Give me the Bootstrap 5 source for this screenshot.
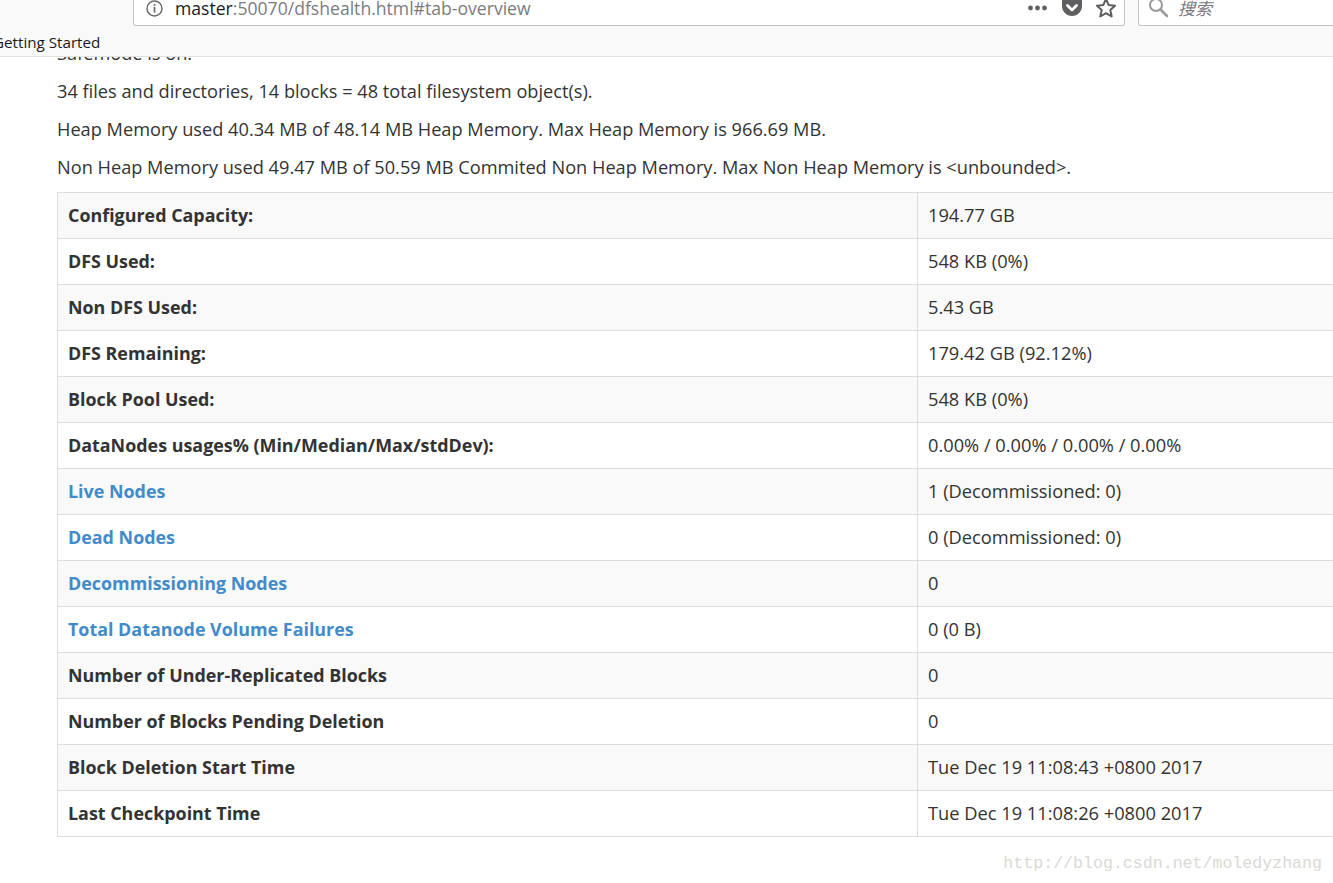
<!DOCTYPE html>
<html lang="en">
<head>
    <meta charset="UTF-8">
    <meta name="viewport" content="width=device-width, initial-scale=1.0">
    <title>Namenode information</title>
    <link href="https://cdn.jsdelivr.net/npm/bootstrap@5.3.3/dist/css/bootstrap.min.css" rel="stylesheet">
    <style>
        html, body { height: 100%; overflow: hidden; }
        body { background: #fff; font-family: "Open Sans", "Noto Sans", sans-serif; color: #333; }
        .browser-chrome { height: 57px; background: #f9f9fa; border-bottom: 1px solid #e1e1e2; position: relative; z-index: 2; }
        .toolbar-row { height: 26px; overflow: hidden; }
        .url-box { width: 992px; margin-left: 133px; height: 26px; background: #fff; border: 1px solid #c4c4c6; border-top: 0; border-radius: 0 0 3px 3px; font-size: 17.6px; padding: 0 7px 9px 11px; }
        .url-icon { margin-right: 11px; }
        .url-host { color: #1a1a1a; }
        .url-rest { color: #7b7b7f; }
        .url-actions { gap: 12px; }
        .search-box { width: 210px; margin-left: 13px; height: 26px; background: #fff; border: 1px solid #c4c4c6; border-top: 0; border-right: 0; border-radius: 0 0 0 3px; padding: 0 0 9px 9px; font-size: 17px; color: #7b7b7f; font-family: "Noto Sans CJK SC", sans-serif; font-style: italic; }
        .bookmark-row { font-size: 15.2px; line-height: 20px; padding-top: 6px; margin-left: -7px; color: #1a1a1a; white-space: nowrap; }
        .page-wrap { width: 1500px; padding-left: 57px; margin-top: -17px; font-size: 18.2px; line-height: 26px; }
        .page-wrap p { margin-bottom: 12px; }
        .fs-table { width: 1380px; table-layout: fixed; font-size: 18.25px; line-height: 25px; margin-bottom: 0; border-color: #ddd; --bs-table-striped-bg: #f9f9f9; --bs-table-color: #333; --bs-table-striped-color: #333; }
        .fs-table > tbody > tr > * { padding: 9px 10px 11px; border: 1px solid #ddd; font-weight: 400; height: 46px; }
        .fs-table > tbody > tr > th { width: 860px; padding: 10px; font-weight: 700; font-size: 17.9px; }
        .fs-table a { color: #428bca; text-decoration: none; }
        .watermark { right: 11px; bottom: 9px; font-family: "Liberation Mono", monospace; font-size: 16.6px; line-height: 20px; color: #d9d9d5; z-index: 3; }
    </style>
</head>
<body>
    <div class="browser-chrome">
        <div class="toolbar-row d-flex">
            <div class="url-box d-flex align-items-center flex-shrink-0">
                <svg width="19" height="19" viewBox="0 0 19 19" class="flex-shrink-0 url-icon">
                    <circle cx="9.5" cy="9.5" r="7.5" fill="none" stroke="#66666a" stroke-width="1.4"/>
                    <rect x="8.7" y="8" width="1.7" height="5.5" fill="#66666a"/>
                    <rect x="8.7" y="5" width="1.7" height="1.8" fill="#66666a"/>
                </svg>
                <div class="flex-grow-1 text-nowrap"><span class="url-host">master</span><span class="url-rest">:50070/dfshealth.html#tab-overview</span></div>
                <div class="d-flex align-items-center url-actions flex-shrink-0">
                    <svg width="22" height="8" viewBox="0 0 22 8"><circle cx="3.5" cy="4" r="2.4" fill="#5f5f63"/><circle cx="10.5" cy="4" r="2.4" fill="#5f5f63"/><circle cx="17.5" cy="4" r="2.4" fill="#5f5f63"/></svg>
                    <svg width="22" height="20" viewBox="0 0 22 20"><path d="M1 0H21V8C21 13.500 16.500 18 11 18C5.500 18 1 13.500 1 8Z" fill="#5f5f63"/><path d="M6.500 7.500L11 12L15.500 7.500" fill="none" stroke="#fff" stroke-width="2.800" stroke-linecap="round" stroke-linejoin="round"/></svg>
                    <svg width="22" height="22" viewBox="0 0 22 22"><path d="M11 2L13.700 8L20 8.700L15.300 13L16.700 19.500L11 16.200L5.300 19.500L6.700 13L2 8.700L8.300 8Z" fill="none" stroke="#5f5f63" stroke-width="2" stroke-linejoin="round"/></svg>
                </div>
            </div>
            <div class="search-box d-flex align-items-center gap-2 flex-shrink-0">
                <svg width="22" height="22" viewBox="0 0 22 22" class="flex-shrink-0"><circle cx="8" cy="8" r="6" fill="none" stroke="#9a9a9c" stroke-width="2"/><path d="M12.500 12.500L19 19" stroke="#9a9a9c" stroke-width="2.600" stroke-linecap="round"/></svg>
                <span>搜索</span>
            </div>
        </div>
        <div class="bookmark-row">Getting Started</div>
    </div>

    <div class="page-wrap">
        <p>Safemode is on.</p>
        <p>34 files and directories, 14 blocks = 48 total filesystem object(s).</p>
        <p>Heap Memory used 40.34 MB of 48.14 MB Heap Memory. Max Heap Memory is 966.69 MB.</p>
        <p>Non Heap Memory used 49.47 MB of 50.59 MB Commited Non Heap Memory. Max Non Heap Memory is &lt;unbounded&gt;.</p>
        <table class="table table-striped fs-table">
            <tbody>
                <tr><th>Configured Capacity:</th><td>194.77 GB</td></tr>
                <tr><th>DFS Used:</th><td>548 KB (0%)</td></tr>
                <tr><th>Non DFS Used:</th><td>5.43 GB</td></tr>
                <tr><th>DFS Remaining:</th><td>179.42 GB (92.12%)</td></tr>
                <tr><th>Block Pool Used:</th><td>548 KB (0%)</td></tr>
                <tr><th>DataNodes usages% (Min/Median/Max/stdDev):</th><td>0.00% / 0.00% / 0.00% / 0.00%</td></tr>
                <tr><th><a href="#tab-datanode">Live Nodes</a></th><td>1 (Decommissioned: 0)</td></tr>
                <tr><th><a href="#tab-datanode">Dead Nodes</a></th><td>0 (Decommissioned: 0)</td></tr>
                <tr><th><a href="#tab-datanode">Decommissioning Nodes</a></th><td>0</td></tr>
                <tr><th><a href="#tab-datanode-volume-failures">Total Datanode Volume Failures</a></th><td>0 (0 B)</td></tr>
                <tr><th>Number of Under-Replicated Blocks</th><td>0</td></tr>
                <tr><th>Number of Blocks Pending Deletion</th><td>0</td></tr>
                <tr><th>Block Deletion Start Time</th><td>Tue Dec 19 11:08:43 +0800 2017</td></tr>
                <tr><th>Last Checkpoint Time</th><td>Tue Dec 19 11:08:26 +0800 2017</td></tr>
            </tbody>
        </table>
    </div>

    <div class="watermark position-absolute">http://blog.csdn.net/moledyzhang</div>
</body>
</html>
